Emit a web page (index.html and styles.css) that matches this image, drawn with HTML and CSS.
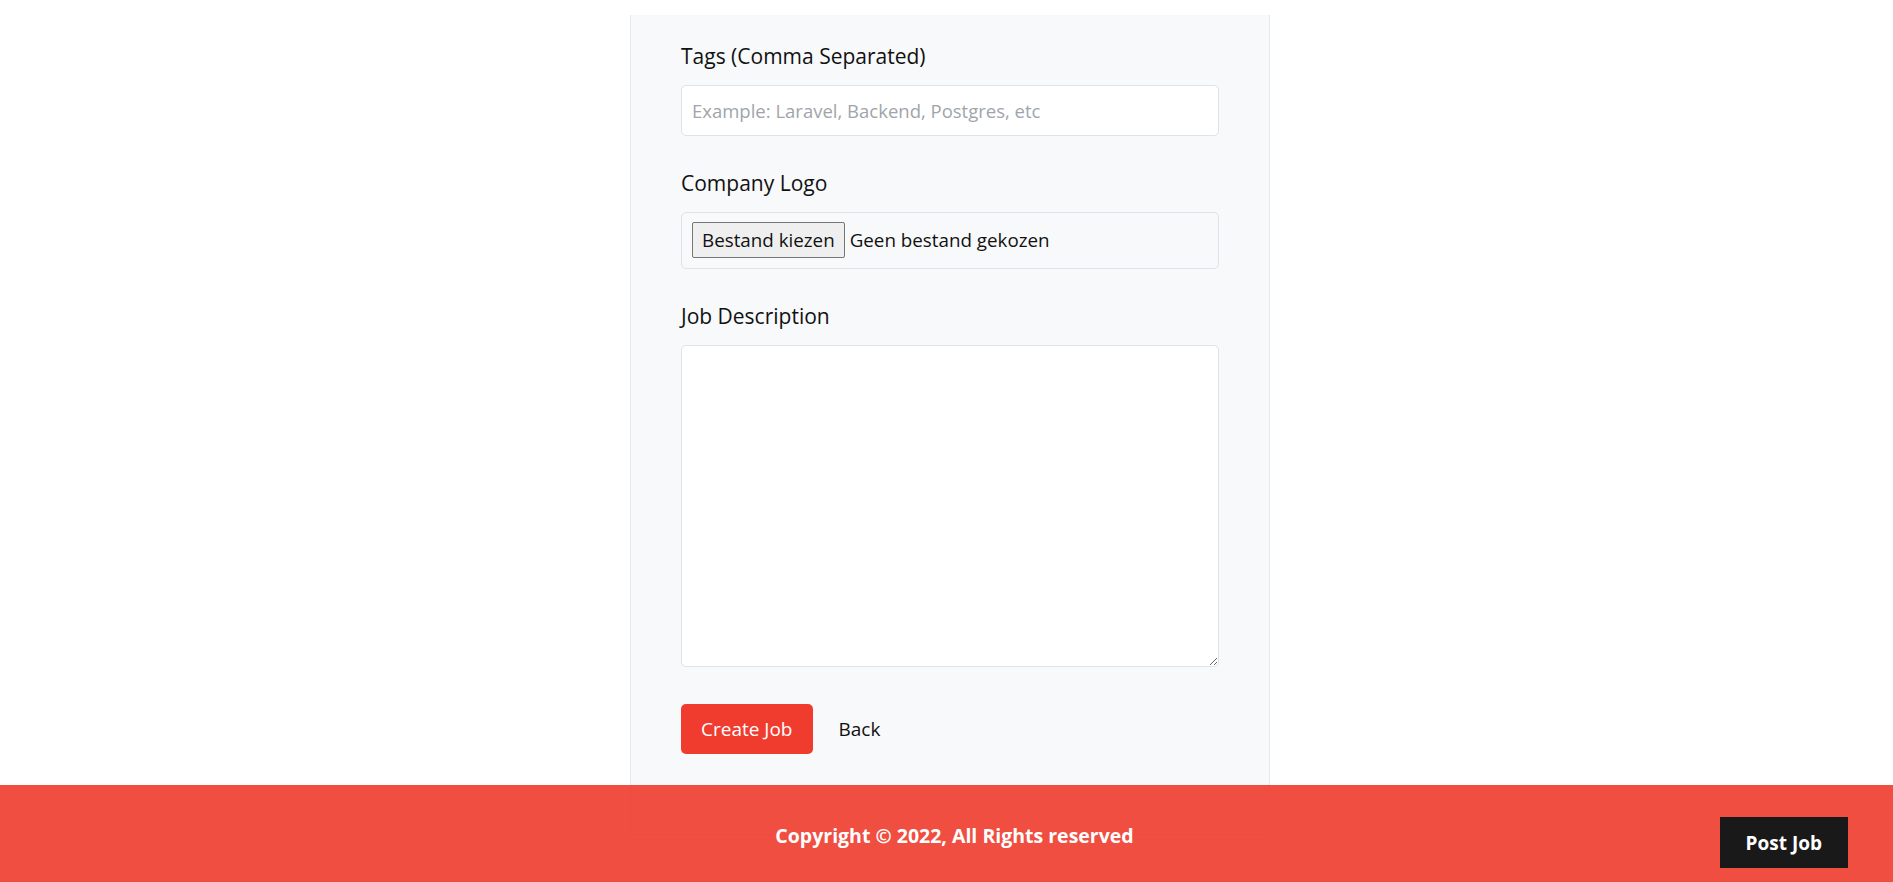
FILE: index.html
```html
<!DOCTYPE html>
<html lang="nl">
<head>
<meta charset="utf-8">
<title>Create Job</title>
<link rel="stylesheet" href="styles.css">
</head>
<body>
<div class="page">
  <main class="panel">
    <form class="form">
      <div class="field">
        <label class="label" for="tags">Tags (Comma Separated)</label>
        <input class="control" id="tags" type="text" placeholder="Example: Laravel, Backend, Postgres, etc">
      </div>
      <div class="field">
        <label class="label">Company Logo</label>
        <div class="control file">
          <span class="file-btn">Bestand kiezen</span>
          <span class="file-name">Geen bestand gekozen</span>
        </div>
      </div>
      <div class="field">
        <label class="label" for="desc">Job Description</label>
        <textarea class="control area" id="desc"></textarea>
      </div>
      <div class="actions">
        <button class="btn" type="button">Create Job</button>
        <a class="back" href="#">Back</a>
      </div>
    </form>
  </main>
</div>
<footer class="footer">
  <p class="copy">Copyright &copy; 2022, All Rights reserved</p>
  <a class="post" href="#">Post Job</a>
</footer>
</body>
</html>
```
FILE: styles.css
```css
* { box-sizing: border-box; }
html, body { margin: 0; padding: 0; background: #fff; }
body {
  font-family: "Open Sans", "Noto Sans", sans-serif;
  color: #111;
}
.page {
  padding: 15px 0 0 7px;
}
.panel {
  width: 640px;
  margin: 0 auto;
  background: #f8f9fa;
  border: 1px solid #e6e8eb;
  border-top: none;
  padding: 26px 50px 80px;
}
.form { display: flex; flex-direction: column; }
.field { display: flex; flex-direction: column; margin-bottom: 32px; }
.label {
  font-size: 21px;
  line-height: 30px;
  margin-bottom: 14px;
  color: #111;
}
.control {
  display: block;
  width: 100%;
  height: 51px;
  border: 1px solid #dfe2e6;
  border-radius: 5px;
  background: #fff;
  padding: 0 10px;
  font-family: "Open Sans", sans-serif;
  font-size: 18.5px;
  color: #212529;
  outline: none;
}
.control::placeholder { color: #a0a5ab; }
.file {
  height: 57px;
  background: #f8f9fa;
  display: flex;
  align-items: center;
  gap: 5px;
  padding: 0 10px 1px;
}
.file-btn {
  height: 36px;
  display: inline-flex;
  align-items: center;
  padding: 0 9px;
  background: #efefef;
  border: 1px solid #767676;
  border-radius: 2px;
  font-size: 18.8px;
  color: #111;
}
.file-name { font-size: 18.8px; color: #111; }
.area {
  height: 322px;
  resize: vertical;
  padding: 10px;
}
.actions { display: flex; align-items: center; gap: 26px; margin-top: 5px; }
.btn {
  height: 50px;
  padding: 0 20px;
  background: #f03b2f;
  color: #fff;
  border: none;
  border-radius: 5px;
  font-family: "Open Sans", sans-serif;
  font-size: 19px;
}
.back { color: #111; text-decoration: none; font-size: 19px; }
.footer {
  position: fixed;
  left: 0;
  bottom: 0;
  width: 100%;
  height: 97px;
  background: #ef3b2d;
  opacity: 0.9;
  color: #fff;
  font-weight: 700;
  display: flex;
  align-items: center;
  justify-content: center;
}
.copy { margin: 3px 0 0 16px; font-size: 19.5px; }
.post {
  position: absolute;
  top: 32px;
  right: 45px;
  background: #000;
  color: #fff;
  text-decoration: none;
  font-size: 19px;
  line-height: 50px;
  padding: 1px 26px 0;
}
```
